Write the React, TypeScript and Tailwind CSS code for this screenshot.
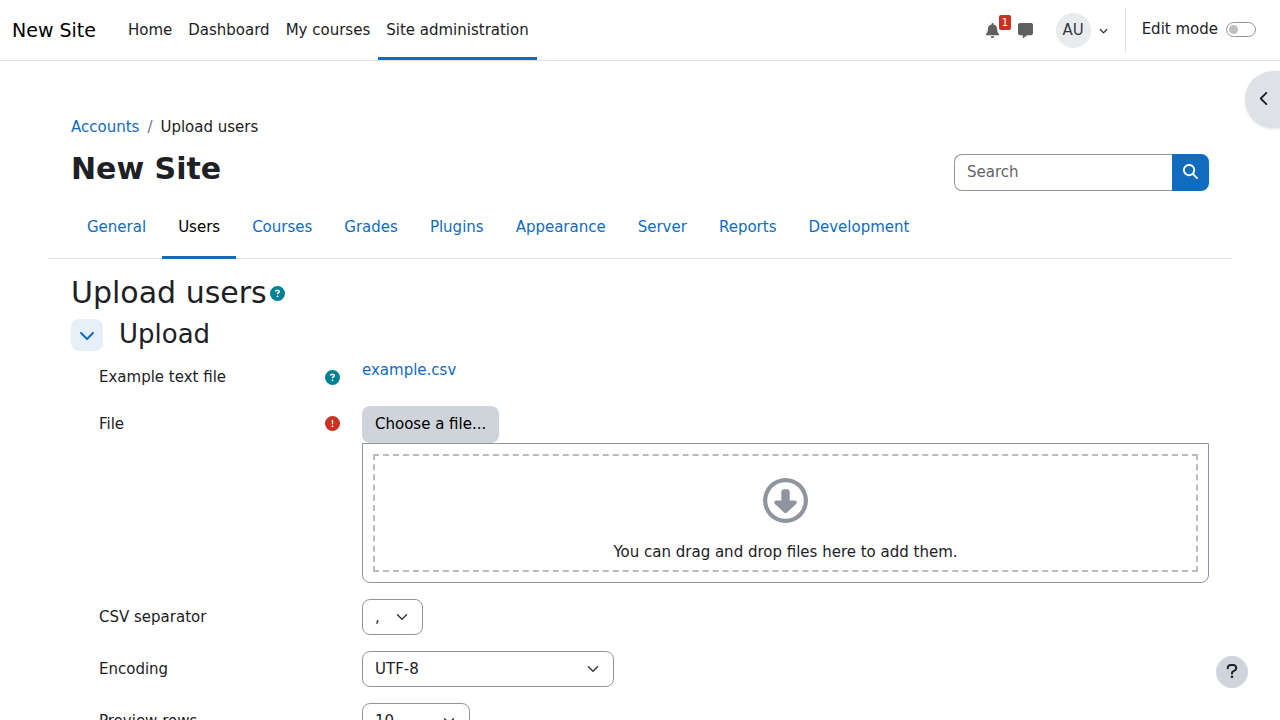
import { useId, type ReactNode } from "react";
import {
  FaBell,
  FaChevronDown,
  FaChevronLeft,
  FaCircleExclamation,
  FaCircleQuestion,
  FaMagnifyingGlass,
  FaMessage,
} from "react-icons/fa6";

const primaryNav = ["Home", "Dashboard", "My courses", "Site administration"];
const adminTabs = ["General", "Users", "Courses", "Grades", "Plugins", "Appearance", "Server", "Reports", "Development"];

function CircleDownIcon() {
  return (
    <svg viewBox="0 0 512 512" className="size-[45px] text-[#8f959e]" fill="currentColor" aria-hidden="true">
      <path d="M256 464a208 208 0 1 1 0-416 208 208 0 1 1 0 416zM256 0a256 256 0 1 0 0 512A256 256 0 1 0 256 0zM376.9 294.6c4.5-4.2 7.1-10.1 7.1-16.3 0-12.3-10-22.3-22.3-22.3H304v-96c0-17.7-14.3-32-32-32h-32c-17.7 0-32 14.3-32 32v96h-57.7c-12.3 0-22.3 10-22.3 22.3 0 6.2 2.6 12.1 7.1 16.3l107.1 99.9c3.8 3.5 8.7 5.5 13.8 5.5s10.1-2 13.8-5.5l107.1-99.9z" />
    </svg>
  );
}

function QuestionIcon() {
  return (
    <svg viewBox="0 0 16 16" className="size-4" fill="none" aria-hidden="true">
      <path
        d="M3.8 5.2V4.8a2.9 2.9 0 0 1 2.9-2.9h2.5a3 3 0 0 1 1.5 5.6L8.8 8.7a1.6 1.6 0 0 0-.8 1.4v.3"
        stroke="currentColor"
        strokeWidth="2"
        strokeLinecap="round"
        strokeLinejoin="round"
      />
      <circle cx="8" cy="13.7" r="1.3" fill="currentColor" />
    </svg>
  );
}

function Header() {
  return (
    <header className="flex h-[61px] items-stretch border-b border-[#dee2e6] bg-white pl-3 pr-6">
      <a href="#" className="mr-6 flex items-center text-[19px] text-black">New Site</a>
      <nav aria-label="Site" className="flex">
        {primaryNav.map((item) => (
          <a
            key={item}
            href="#"
            className={
              item === "Site administration"
                ? "flex items-center border-y-3 border-t-transparent border-b-[#0f6cbf] px-2"
                : "flex items-center border-y-3 border-transparent px-2"
            }
          >
            {item}
          </a>
        ))}
      </nav>
      <div className="ml-auto flex items-center">
        <button type="button" aria-label="Notifications" className="relative mr-[18px] text-[#5f5f5f]">
          <FaBell size={15} />
          <span className="absolute -top-2 left-3.5 h-[15px] rounded-xs bg-[#ca3120] px-[3px] text-[10px] leading-[15px] text-white">1</span>
        </button>
        <button type="button" aria-label="Messages" className="mr-[23px] text-[#5f5f5f]">
          <FaMessage size={15} />
        </button>
        <button type="button" aria-label="User menu" className="mr-[17px] flex items-center gap-2">
          <span className="flex size-[35px] items-center justify-center rounded-full bg-[#e9ecef] text-[#343a40]">AU</span>
          <FaChevronDown size={9} />
        </button>
        <div className="mr-4 h-[45px] w-px bg-[#dee2e6]" />
        <div className="flex items-center gap-2 pb-0.5">
          <label htmlFor="edit-mode">Edit mode</label>
          <input
            id="edit-mode"
            type="checkbox"
            role="switch"
            className="flex h-[15px] w-[30px] appearance-none items-center rounded-full border border-[#8f959e] pl-0.5 before:size-[9px] before:rounded-full before:bg-[#bfbfbf] checked:justify-end"
          />
        </div>
      </div>
    </header>
  );
}

function Row({ label, icon, htmlFor, children }: { label: string; icon?: ReactNode; htmlFor?: string; children: ReactNode }) {
  return (
    <div className="mb-4 flex pl-7">
      <div className="flex w-[263px] shrink-0 items-start justify-between pr-[22px] pt-[7px]">
        {htmlFor ? <label htmlFor={htmlFor}>{label}</label> : <span>{label}</span>}
        {icon}
      </div>
      <div className="min-w-0 flex-1">{children}</div>
    </div>
  );
}

function SelectRow({ label, options, width }: { label: string; options: string[]; width: string }) {
  const id = useId();
  return (
    <Row label={label} htmlFor={id}>
      <div className={`grid items-center ${width}`}>
        <select
          id={id}
          className="col-start-1 row-start-1 h-9 w-full appearance-none rounded-lg border border-[#8f959e] bg-white pl-3 pr-8"
        >
          {options.map((option) => (
            <option key={option}>{option}</option>
          ))}
        </select>
        <svg
          viewBox="0 0 16 16"
          className="pointer-events-none col-start-1 row-start-1 mr-[15px] size-3 justify-self-end"
          fill="none"
          stroke="#343a40"
          strokeWidth="2"
          strokeLinecap="round"
          strokeLinejoin="round"
        >
          <path d="m2 5 6 6 6-6" />
        </svg>
      </div>
    </Row>
  );
}

export default function App() {
  return (
    <div className="min-h-screen bg-white font-['DejaVu_Sans',sans-serif] text-[15px] leading-[23px] text-[#1d2125]">
      <Header />
      <button
        type="button"
        aria-label="Open block drawer"
        className="fixed right-0 top-[71px] flex h-[57px] w-[35px] items-center rounded-l-full bg-[#dee2e6] pb-0.5 pl-3 shadow"
      >
        <FaChevronLeft size={15} />
      </button>

      <main className="px-12 pt-[55px]">
        <div className="px-[23px]">
          <nav aria-label="Breadcrumb" className="flex gap-2">
            <a href="#" className="text-[#0f6cbf]">Accounts</a>
            <span className="text-[#6a737b]">/</span>
            <span>Upload users</span>
          </nav>
          <div className="mt-3 flex items-start justify-between">
            <h1 className="text-[30px] font-bold leading-9">New Site</h1>
            <form className="mt-[3px] flex h-[37px] w-[255px]">
              <input
                aria-label="Search"
                placeholder="Search"
                className="min-w-0 flex-1 rounded-l-lg border border-r-0 border-[#8f959e] px-3 placeholder:text-[#5f6368]"
              />
              <button type="button" aria-label="Search" className="flex w-[37px] items-center justify-center rounded-r-lg bg-[#0f6cbf] pb-0.5 text-white">
                <FaMagnifyingGlass size={15} />
              </button>
            </form>
          </div>
        </div>

        <nav aria-label="Administration" className="mt-1 flex h-16 border-b border-[#dee2e6] pl-[23px]">
          {adminTabs.map((tab) => (
            <a
              key={tab}
              href="#"
              className={
                tab === "Users"
                  ? "-mb-px flex items-center border-y-3 border-t-transparent border-b-[#0f6cbf] px-4 text-black"
                  : "-mb-px flex items-center border-y-3 border-transparent px-4 text-[#0f6cbf]"
              }
            >
              {tab}
            </a>
          ))}
        </nav>

        <div className="px-[23px] pt-4">
          <div className="flex items-center gap-[3px]">
            <h2 className="text-[30px] leading-9">Upload users</h2>
            <button type="button" aria-label="Help with Upload users" className="text-[#008196]">
              <FaCircleQuestion size={15} />
            </button>
          </div>
          <div className="mt-2 flex items-start gap-4">
            <button type="button" aria-label="Collapse Upload" className="flex size-8 items-center justify-center rounded-lg bg-[#e7f0f9] text-[#0f6cbf]">
              <FaChevronDown size={16} />
            </button>
            <h3 className="text-[26px] leading-[30px]">Upload</h3>
          </div>

          <form className="mt-2">
            <Row
              label="Example text file"
              icon={
                <button type="button" aria-label="Help with Example text file" className="mt-1 text-[#008196]">
                  <FaCircleQuestion size={15} />
                </button>
              }
            >
              <a href="#" className="flex h-[31px] text-[#0f6cbf]">example.csv</a>
            </Row>
            <Row label="File" icon={<FaCircleExclamation title="Required" size={15} className="mt-[3px] text-[#ca3120]" />}>
              <button type="button" className="h-[37px] rounded-lg bg-[#ced4da] px-[13px] text-black">Choose a file...</button>
              <div className="rounded-b-lg border border-[#8f959e] p-2.5">
                <div className="flex h-[118px] flex-col items-center justify-between border-2 border-dashed border-[#bbb] pb-1.5 pt-[22px]">
                  <CircleDownIcon />
                  <span>You can drag and drop files here to add them.</span>
                </div>
              </div>
            </Row>
            <SelectRow label="CSV separator" options={[",", ";", ":", "\\t"]} width="w-[61px]" />
            <SelectRow label="Encoding" options={["UTF-8"]} width="w-[252px]" />
            <SelectRow label="Preview rows" options={["10", "20", "100"]} width="w-[108px]" />
          </form>
        </div>
      </main>

      <button
        type="button"
        aria-label="Show footer"
        className="fixed bottom-8 right-8 flex size-8 items-center justify-center rounded-full bg-[#ced4da] pb-0.5"
      >
        <QuestionIcon />
      </button>
    </div>
  );
}
